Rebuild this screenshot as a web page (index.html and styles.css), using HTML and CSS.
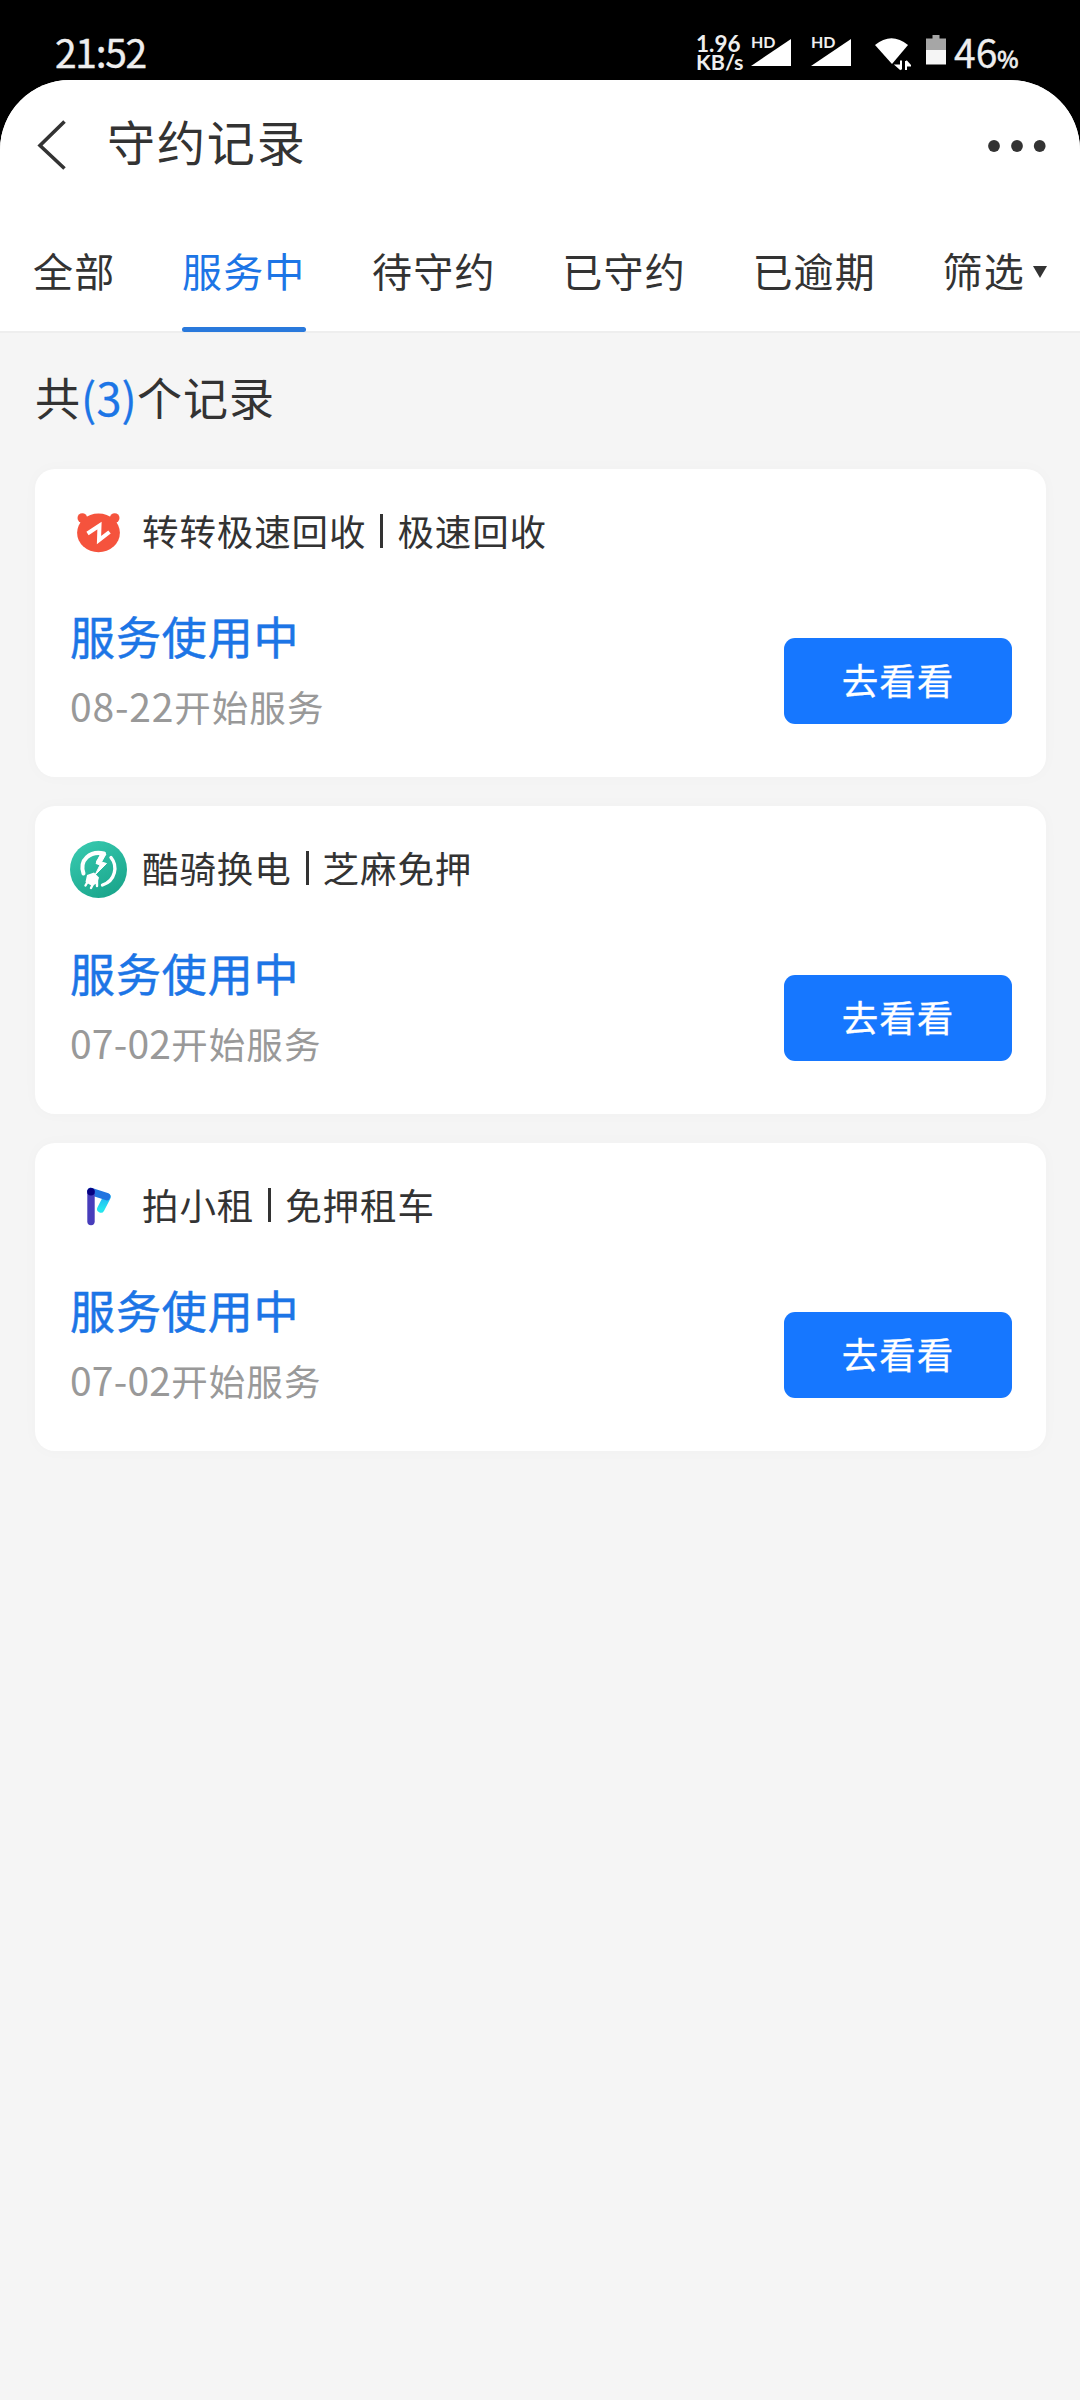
FILE: index.html
```html
<!DOCTYPE html>
<html lang="zh-CN">
<head>
<meta charset="utf-8">
<title>守约记录</title>
<link rel="stylesheet" href="styles.css">
</head>
<body>
<div class="statusbar">
  <span class="clock">21:52</span>
  <div class="speed"><span class="rate">1.96</span><span class="unit">KB/s</span></div>
  <div class="signal"><span class="hd">HD</span><svg width="40" height="27" viewBox="0 0 40 27"><path d="M0 27L40 0V27Z" fill="#fff"/></svg></div>
  <div class="signal signal-second"><span class="hd">HD</span><svg width="40" height="27" viewBox="0 0 40 27"><path d="M0 27L40 0V27Z" fill="#fff"/></svg></div>
  <svg class="wifi" width="36" height="34" viewBox="0 0 36 34"><path d="M0 7Q16.5 -6.5 33 7L17 26Z" fill="#fff"/><path d="M26 22.500V31.500M26 31.500L21.500 27.500H26M31 32V23M31 23L35 27.500H31" fill="#fff" stroke="#fff" stroke-width="2"/></svg>
  <svg class="battery" width="20" height="30" viewBox="0 0 20 30"><path d="M6.500 0h7v3.500H20V15H0V3.500h6.500z" fill="#a6a6a6"/><path d="M0 15h20v14.500H0z" fill="#f5f5f5"/></svg>
  <div class="level"><span class="level-num">46</span><span class="percent">%</span></div>
</div>
<main class="screen">
  <div class="top">
    <header class="titlebar">
      <svg class="back" width="32" height="50" viewBox="0 0 32 50"><path d="M28.500 1.500L4 25.500L28.500 48.500" fill="none" stroke="#333" stroke-width="3.600"/></svg>
      <h1 class="title">守约记录</h1>
      <svg class="more" width="58" height="12" viewBox="0 0 58 12" fill="#333"><circle cx="6" cy="6" r="5.900"/><circle cx="29" cy="6" r="5.900"/><circle cx="51.700" cy="6" r="5.900"/></svg>
    </header>
    <nav class="tabs">
      <span class="tab">全部</span>
      <span class="tab active">服务中</span>
      <span class="tab">待守约</span>
      <span class="tab">已守约</span>
      <span class="tab">已逾期</span>
      <span class="tab">筛选<svg class="caret" width="14" height="12" viewBox="0 0 14 12"><path d="M0 0h14L7 12z" fill="#333"/></svg></span>
    </nav>
  </div>
  <p class="count">共<span class="count-num">(3)</span>个记录</p>
  <div class="cards">
    <section class="card">
      <div class="merchant">
        <svg class="logo" viewBox="0 0 57 57"><g fill="#f5533d"><circle cx="12.300" cy="14" r="4.800"/><circle cx="44.700" cy="14" r="4.800"/><ellipse cx="28.500" cy="28.800" rx="21.400" ry="19.400"/></g><path d="M17.500 29.500L29.500 21.500L29 36L39.500 28" fill="none" stroke="#fff" stroke-width="4"/></svg>
        <span class="name">转转极速回收<i class="bar"></i>极速回收</span>
      </div>
      <div class="detail">
        <div><div class="state">服务使用中</div><div class="date"><span class="day">08-22</span>开始服务</div></div>
        <button class="go">去看看</button>
      </div>
    </section>
    <section class="card">
      <div class="merchant">
        <svg class="logo" viewBox="0 0 57 57"><defs><linearGradient id="mint" x1="0" y1="0" x2=".6" y2="1"><stop offset="0" stop-color="#3accb2"/><stop offset="1" stop-color="#1ba78d"/></linearGradient></defs><circle cx="28.500" cy="28.500" r="28.500" fill="url(#mint)"/><path d="M13.500 32.500C9 19 20 9.500 34 12.500L28 21" fill="none" stroke="#fff" stroke-width="4" stroke-linejoin="round" stroke-linecap="round"/><path d="M31 12L26 22.500L30 24L25 34L36.500 22.500L31.500 21L36 13Z" fill="#fff" stroke="#fff" stroke-width="1" stroke-linejoin="round"/><path d="M41 16.500C48 25 45.500 40 32.500 44" fill="none" stroke="#fff" stroke-width="3.400" stroke-linecap="round"/><path d="M17 34L24 31.500L29 36.500L27.500 42L22 45L15.500 41Z" fill="#fff"/><path d="M17.500 41L15.500 44.500M23 43L21 47M27 40V45" stroke="#fff" stroke-width="2.400" stroke-linecap="round"/></svg>
        <span class="name">酷骑换电<i class="bar"></i>芝麻免押</span>
      </div>
      <div class="detail">
        <div><div class="state">服务使用中</div><div class="date"><span class="day day-wide">07-02</span>开始服务</div></div>
        <button class="go">去看看</button>
      </div>
    </section>
    <section class="card">
      <div class="merchant">
        <svg class="logo" viewBox="0 0 57 57"><defs><linearGradient id="sky" x1="0" y1="0" x2="0" y2="1"><stop offset="0" stop-color="#22b5f5"/><stop offset="1" stop-color="#25e5ee"/></linearGradient></defs><g stroke-linecap="round" fill="none"><path d="M37 19L30.800 31" stroke="url(#sky)" stroke-width="7.400"/><path d="M21 13.500L36.500 18.500" stroke="#2275e0" stroke-width="7.600"/><path d="M21 14V43.500" stroke="#473dbb" stroke-width="7.400"/></g><circle cx="21" cy="13.800" r="3.800" fill="#060080"/></svg>
        <span class="name">拍小租<i class="bar"></i>免押租车</span>
      </div>
      <div class="detail">
        <div><div class="state">服务使用中</div><div class="date"><span class="day day-wide">07-02</span>开始服务</div></div>
        <button class="go">去看看</button>
      </div>
    </section>
  </div>
</main>
</body>
</html>
```

FILE: styles.css
```css
* { box-sizing: border-box; }
body {
  margin: 0;
  width: 1080px;
  height: 2400px;
  overflow: hidden;
  background: #000;
  color: #333;
  font-family: "Noto Sans CJK SC", sans-serif;
}
.statusbar {
  display: flex;
  align-items: flex-start;
  height: 80px;
  color: #eee;
}
.clock {
  width: 641px;
  margin: 31px 0 0 55px;
  font-size: 39px;
  line-height: 40px;
  letter-spacing: -1.3px;
  -webkit-text-stroke: 0.4px #eee;
}
.speed {
  display: flex;
  flex-direction: column;
  width: 55px;
  padding-top: 34px;
  font: 700 21.500px/19px Lato, sans-serif;
}
.rate { font-size: 22.500px; }
.signal {
  position: relative;
  width: 60px;
  padding-top: 39px;
}
.signal svg { display: block; }
.signal-second { width: 64px; }
.hd {
  position: absolute;
  left: 0;
  top: 33px;
  font: 700 16px/18px Lato, sans-serif;
}
.wifi { margin: 38px 0 0; }
.battery { margin: 35px 0 0 15px; }
.level {
  display: flex;
  align-items: baseline;
  margin: 31px 0 0 8px;
  line-height: 40px;
}
.level-num { font-size: 39px; -webkit-text-stroke: 0.3px #eee; }
.percent { font-size: 23px; -webkit-text-stroke: 0.8px #eee; }
.screen {
  height: 2320px;
  overflow: hidden;
  border-radius: 70px 70px 0 0;
  background: #f5f5f5;
}
.top {
  height: 253px;
  background: #fff;
  border-bottom: 2px solid #eee;
}
.titlebar {
  display: flex;
  align-items: center;
  height: 130px;
  padding: 0 34px 0 36px;
}
.title {
  flex: 1;
  margin: -10px 0 0 39px;
  font-size: 48px;
  line-height: 60px;
  font-weight: 400;
  letter-spacing: 1.900px;
}
.more { margin-top: 2px; }
.tabs {
  display: flex;
  justify-content: space-between;
  height: 122px;
  padding: 0 33px;
}
.tab {
  display: flex;
  align-items: center;
  height: 122px;
  padding-bottom: 2px;
  font-size: 40px;
  line-height: 60px;
  letter-spacing: 1.200px;
}
.active {
  position: relative;
  color: #1c75e6;
}
.active::after {
  content: "";
  position: absolute;
  left: 0;
  right: 0;
  bottom: 0;
  height: 5px;
  border-radius: 3px;
  background: #2979dc;
}
.caret { margin: 3px 0 0 8px; }
.count {
  height: 136px;
  margin: 0;
  padding: 34px 0 0 35px;
  font-size: 45px;
  line-height: 60px;
  letter-spacing: 1px;
}
.count-num {
  color: #1c75e6;
  letter-spacing: 0.2px;
  -webkit-text-stroke: 0.3px #1c75e6;
}
.cards {
  display: flex;
  flex-direction: column;
  gap: 29px;
  padding: 0 34px 0 35px;
}
.card {
  height: 308px;
  padding: 35px 34px 0 35px;
  border-radius: 20px;
  background: #fff;
  box-shadow: 0 0 16px rgba(0, 0, 0, 0.025);
}
.merchant {
  display: flex;
  align-items: center;
  height: 57px;
}
.logo { width: 57px; height: 57px; }
.name {
  display: flex;
  align-items: center;
  margin: -4px 0 0 15px;
  font-size: 36.500px;
  line-height: 50px;
  letter-spacing: 0.900px;
}
.bar {
  width: 3px;
  height: 34px;
  margin: 0 14px;
  background: #333;
}
.detail {
  display: flex;
  justify-content: space-between;
  margin-top: 47px;
}
.state {
  margin-top: -2px;
  color: #1c75e6;
  font-size: 45px;
  line-height: 60px;
  letter-spacing: 0.900px;
  -webkit-text-stroke: 0.5px #1c75e6;
}
.date {
  margin-top: 14px;
  color: #999;
  font-size: 36.500px;
  line-height: 50px;
  letter-spacing: 1.100px;
}
.day { font-size: 39px; letter-spacing: 0.800px; }
.day-wide { letter-spacing: 0.200px; }
.go {
  width: 228px;
  height: 86px;
  margin: 30px 0 0;
  padding: 0 0 3px;
  border: 0;
  border-radius: 11px;
  background: #1677ff;
  color: #fff;
  font-family: inherit;
  font-size: 36.500px;
  line-height: 50px;
  letter-spacing: 1px;
  -webkit-text-stroke: 0.3px #fff;
}
```
